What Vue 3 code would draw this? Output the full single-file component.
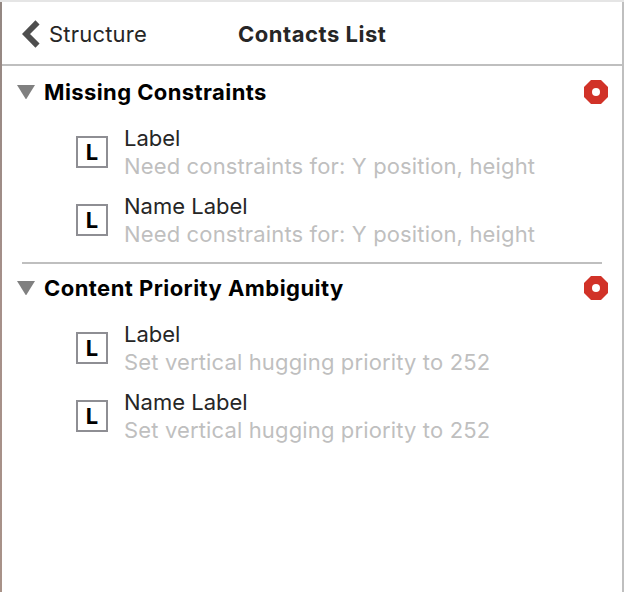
<script setup>
const sections = [
  {
    title: 'Missing Constraints',
    kind: 'missing',
    hint: 'Need constraints for: Y position, height',
    items: ['Label', 'Name Label'],
  },
  {
    title: 'Content Priority Ambiguity',
    kind: 'ambiguity',
    hint: 'Set vertical hugging priority to 252',
    items: ['Label', 'Name Label'],
  },
]
</script>

<template>
  <div class="panel">
    <header class="bar">
      <div class="back">
        <svg class="chevron" width="18" height="28" viewBox="0 0 18 28">
          <path d="M15.5 2.4 L4 14 L15.5 25.6" fill="none" stroke="#4e4e4e" stroke-width="5.8" />
        </svg>
        <span class="back-text">Structure</span>
      </div>
      <h1 class="title"><span>Contacts List</span></h1>
    </header>
    <section v-for="s in sections" :key="s.kind" class="section" :class="s.kind">
      <div class="section-head">
        <svg class="disclosure" width="18" height="14" viewBox="0 0 18 14">
          <path d="M0 0 H18 L9 14.5 Z" fill="#808080" />
        </svg>
        <h2><span>{{ s.title }}</span></h2>
        <svg class="error" width="24" height="24" viewBox="0 0 24 24">
          <path d="M7 0 H17 L24 7 V17 L17 24 H7 L0 17 V7 Z" fill="#d13228" />
          <circle cx="12" cy="12" r="4" fill="#fff" />
        </svg>
      </div>
      <div v-for="name in s.items" :key="name" class="row">
        <span class="badge">L</span>
        <div class="text">
          <div class="name"><span>{{ name }}</span></div>
          <div class="hint"><span>{{ s.hint }}</span></div>
        </div>
      </div>
    </section>
  </div>
</template>

<style>
body {
  background: #fff;
}
</style>

<style scoped>
.panel {
  box-sizing: border-box;
  width: 624px;
  height: 592px;
  padding: 2px 2px 0;
  font-family: Inter, "Liberation Sans", sans-serif;
  font-size: 22px;
  line-height: 28px;
  white-space: nowrap;
  background:
    linear-gradient(#e5e5e5, #e5e5e5) 0 0 / 100% 2px no-repeat,
    linear-gradient(#938782, #a6908a 50%, #a89288) 0 0 / 2px 100% no-repeat,
    linear-gradient(#bfbfbf, #bfbfbf) 100% 0 / 2px 100% no-repeat,
    #fff;
}
h1,
h2 {
  margin: 0;
  font-size: 22px;
  line-height: 28px;
}
.bar {
  box-sizing: border-box;
  display: grid;
  grid-template-columns: 236px 1fr;
  align-items: center;
  height: 64px;
  padding-top: 2px;
  border-bottom: 2px solid #bfbfbf;
  color: #262626;
}
.back {
  display: flex;
  align-items: center;
  padding-left: 20px;
}
.chevron {
  margin-right: 9px;
}
.back-text {
  letter-spacing: 0.2px;
}
.title {
  font-weight: 700;
  letter-spacing: 0.53px;
}
.section {
  padding-bottom: 8px;
}
.section + .section {
  background: linear-gradient(#bfbfbf, #bfbfbf) 20px 0 / 580px 2px no-repeat;
}
.section-head {
  display: flex;
  align-items: center;
  height: 52px;
  padding: 0 14px 0 15px;
}
.disclosure {
  margin-right: 9px;
}
h2 {
  flex: 1;
  font-weight: 700;
  letter-spacing: 0.41px;
  color: #000;
}
.ambiguity h2 {
  letter-spacing: 0.45px;
}
.row {
  display: flex;
  align-items: center;
  height: 68px;
  padding-left: 74px;
}
.badge {
  box-sizing: border-box;
  width: 32px;
  height: 32px;
  margin-right: 16px;
  border: 2px solid #8e8e93;
  font-weight: 700;
  text-align: center;
  color: #000;
}
.name {
  color: #262626;
}
.hint {
  letter-spacing: 0.14px;
  color: #bfbfbf;
}
</style>
